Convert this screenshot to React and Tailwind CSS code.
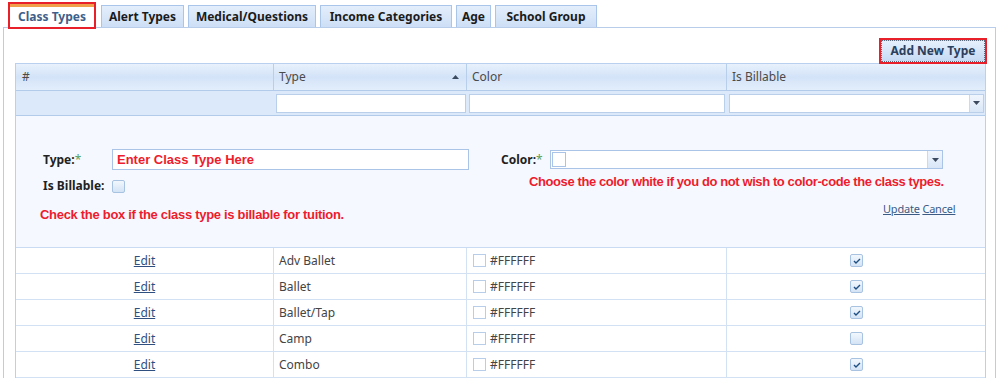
import React from "react";

const tabs = [
  { label: "Class Types", w: "w-[88px]" },
  { label: "Alert Types", w: "w-[83px]" },
  { label: "Medical/Questions", w: "w-[128px]" },
  { label: "Income Categories", w: "w-[132px]" },
  { label: "Age", w: "w-[35px]" },
  { label: "School Group", w: "w-[102px]" },
];

const rows = [
  { type: "Adv Ballet", billable: true },
  { type: "Ballet", billable: true },
  { type: "Ballet/Tap", billable: true },
  { type: "Camp", billable: false },
  { type: "Combo", billable: true },
];

const cols = "grid grid-cols-[258px_193px_260px_259px]";

const Arrow = ({ up }) => (
  <svg width="7" height="4" viewBox="0 0 7 4" aria-hidden="true">
    <path d={up ? "M0 4h7L3.5 0Z" : "M0 0h7L3.5 4Z"} fill="#3b4a5e" />
  </svg>
);

const Check = ({ checked }) => (
  <span className="w-[13px] h-[13px] rounded-[2px] border border-[#a8c2e2] bg-gradient-to-b from-[#f2f7fd] to-[#d4e3f5] flex items-center justify-center">
    {checked ? (
      <svg width="8" height="6" viewBox="0 0 8 6" aria-hidden="true">
        <path d="M1 3l2 2 4-4" fill="none" stroke="#1f4f82" strokeWidth="1.4" />
      </svg>
    ) : null}
  </span>
);

export default function App() {
  return (
    <div className="w-[1000px] h-[378px] overflow-hidden bg-white text-[12px] font-['Noto_Sans',sans-serif] text-[#333]">
      {/* Pestañas */}
      <div className="flex items-end pl-[8px] h-[27px] relative z-10">
        {tabs.map((t, i) =>
          i === 0 ? (
            <div
              key={t.label}
              className={`${t.w} h-[27px] border-2 border-[#e8202a] bg-white flex flex-col -mb-[2px] mr-[5px]`}
            >
              <div className="h-[3px] bg-[#f0a04a]" />
              <div className="flex-1 flex items-center justify-center font-bold text-[#3e5f8a] pb-[1px]">
                {t.label}
              </div>
            </div>
          ) : (
            <div
              key={t.label}
              className={`${t.w} h-[22px] mr-[4px] border border-b-0 border-[#a9c5ea] bg-gradient-to-b from-[#e4eefb] to-[#cddff6] flex items-center justify-center font-bold text-[#1b1b1b]`}
            >
              {t.label}
            </div>
          )
        )}
      </div>

      {/* Panel */}
      <div className="ml-[3px] w-[993px] h-[360px] border border-[#b7cdea] pt-[10px] pl-[11px]">
        <div className="w-[970px] flex justify-end">
          <div className="-mr-[2px] border-2 border-[#e8202a]">
            <button
              type="button"
              className="w-[104px] h-[22px] bg-gradient-to-b from-[#e6f0fc] to-[#c6daf4] border border-dotted border-[#5a6b80] font-bold text-[#2c3f5c] flex items-center justify-center"
            >
              Add New Type
            </button>
          </div>
        </div>

        <div className="w-[971px] border border-[#b9d0ee] -mt-[1px]">
          {/* Cabecera */}
          <div className={`${cols} h-[27px] bg-gradient-to-b from-[#e8f1fc] via-[#d3e3f8] to-[#e3eefb] border-b border-[#b3cbea] text-[#4a4a4a]`}>
            <div className="pl-[6px] flex items-center border-r border-[#b8cfec]">#</div>
            <div className="pl-[5px] pr-[7px] flex items-center justify-between border-r border-[#b8cfec]">
              <span>Type</span>
              <Arrow up />
            </div>
            <div className="pl-[5px] flex items-center border-r border-[#b8cfec]">Color</div>
            <div className="pl-[5px] flex items-center">Is Billable</div>
          </div>

          {/* Filtros */}
          <div className={`${cols} h-[25px] bg-[#dce9fa] border-b border-[#b3cbea]`}>
            <div />
            <div className="pl-[2px] pr-[1px] flex items-center">
              <div className="w-full h-[19px] bg-white border border-[#b9cfea]" />
            </div>
            <div className="pl-[2px] pr-[2px] flex items-center">
              <div className="w-full h-[19px] bg-white border border-[#b9cfea]" />
            </div>
            <div className="pl-[2px] pr-[2px] flex items-center">
              <div className="w-full h-[19px] bg-white border border-[#b9cfea] flex justify-end">
                <div className="w-[14px] border-l border-[#c9d9ee] bg-gradient-to-b from-[#f1f6fd] to-[#d9e6f7] flex items-center justify-center">
                  <Arrow />
                </div>
              </div>
            </div>
          </div>

          {/* Formulario de edición */}
          <div className="h-[132px] bg-[#f5f9ff] border-b border-[#c9dbf2] pt-[33px]">
            <div className="flex">
              <div className="w-[470px] pl-[27px]">
                <div className="flex items-center h-[21px]">
                  <span className="w-[69px] font-bold text-[#222]">
                    Type:<span className="text-[#5aa05a] font-normal">*</span>
                  </span>
                  <div className="w-[357px] h-[21px] bg-white border border-[#a9c4e6] flex items-center pl-[4px] font-['Liberation_Sans',sans-serif] font-bold text-[13px] text-[#ee1c2c]">
                    Enter Class Type Here
                  </div>
                </div>
                <div className="flex items-center h-[16px] mt-[8px]">
                  <span className="w-[69px] font-bold text-[#222]">Is Billable:</span>
                  <Check checked={false} />
                </div>
                <div className="mt-[11px] -ml-[3px] font-['Liberation_Sans',sans-serif] font-bold text-[13px] text-[#ee1c2c] tracking-[-0.3px]">
                  Check the box if the class type is billable for tuition.
                </div>
              </div>
              <div className="w-[480px] pl-[15px]">
                <div className="flex items-center h-[21px]">
                  <span className="w-[49px] font-bold text-[#222]">
                    Color:<span className="text-[#5aa05a] font-normal">*</span>
                  </span>
                  <div className="w-[393px] h-[19px] bg-white border border-[#a9c4e6] flex items-center">
                    <span className="ml-[1px] w-[14px] h-[15px] border border-[#a9c4e6] bg-white" />
                    <span className="flex-1" />
                    <span className="w-[15px] h-full border-l border-[#c9d9ee] bg-gradient-to-b from-[#f1f6fd] to-[#d9e6f7] flex items-center justify-center">
                      <Arrow />
                    </span>
                  </div>
                </div>
                <div className="mt-[2px] pl-[28px] font-['Liberation_Sans',sans-serif] font-bold text-[13px] text-[#ee1c2c] tracking-[-0.4px]">
                  Choose the color white if you do not wish to color-code the class types.
                </div>
                <div className="mt-[9px] pl-[382px] text-[11px] text-[#3b5b84] tracking-[-0.2px]">
                  <span className="underline">Update</span> <span className="underline">Cancel</span>
                </div>
              </div>
            </div>
          </div>

          {/* Filas */}
          {rows.map((r) => (
            <div key={r.type} className={`${cols} h-[26px] bg-white border-b border-[#d2e1f4]`}>
              <div className="flex items-center justify-center border-r border-[#d2e1f4]">
                <a href="#" className="text-[#2f4f80] underline">
                  Edit
                </a>
              </div>
              <div className="pl-[5px] flex items-center border-r border-[#d2e1f4] text-[#444]">{r.type}</div>
              <div className="pl-[6px] flex items-center gap-[4px] border-r border-[#d2e1f4] text-[#444]">
                <span className="w-[13px] h-[13px] border border-[#b8cde8] bg-white" />
                #FFFFFF
              </div>
              <div className="flex items-center justify-center">
                <Check checked={r.billable} />
              </div>
            </div>
          ))}
        </div>
      </div>
    </div>
  );
}
